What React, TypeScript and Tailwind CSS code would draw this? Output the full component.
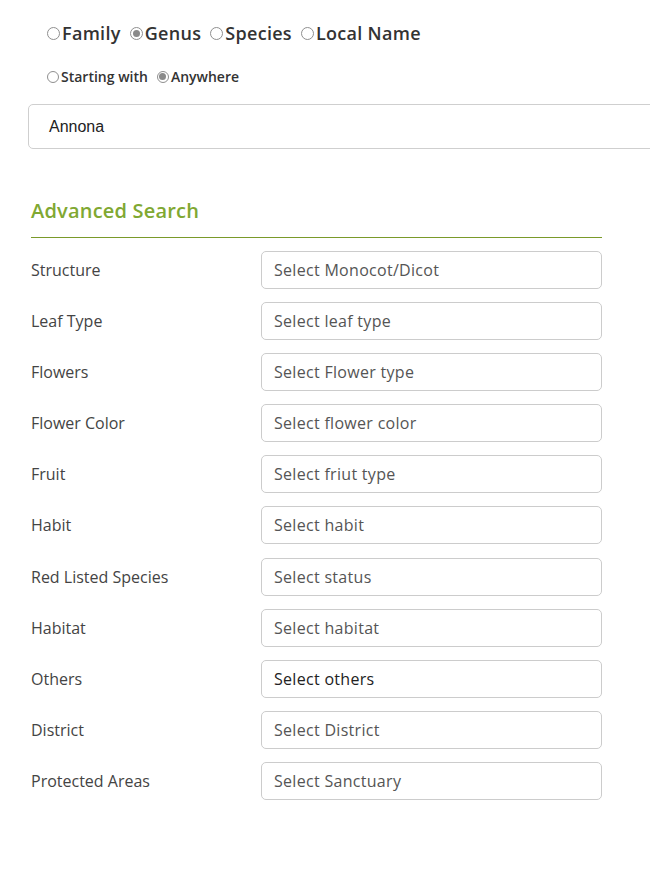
import React, { useState } from "react";

const fields: [string, string][] = [
    ["Structure", "Select Monocot/Dicot"],
    ["Leaf Type", "Select leaf type"],
    ["Flowers", "Select Flower type"],
    ["Flower Color", "Select flower color"],
    ["Fruit", "Select friut type"],
    ["Habit", "Select habit"],
    ["Red Listed Species", "Select status"],
    ["Habitat", "Select habitat"],
    ["Others", "Select others"],
    ["District", "Select District"],
    ["Protected Areas", "Select Sanctuary"],
];

function Radio({checked, small}: {checked: boolean; small?: boolean}){
    return (
        <span className={"inline-flex items-center justify-center rounded-full border border-[#8f8f8f] bg-white " + (small ? "h-[12px] w-[12px]" : "h-[13px] w-[13px]")}>
            {checked && <span className="h-[7px] w-[7px] rounded-full bg-[#8a8a8a]"/>}
        </span>
    )
}

function App(){
    const [kind, setKind] = useState<string>("Genus")
    const [where, setWhere] = useState<string>("Anywhere")

    return(
        <div className="w-[650px] h-[892px] overflow-hidden bg-white" style={{fontFamily: "'Open Sans', sans-serif"}}>
            <div className="pl-[47px] pt-[20px] flex flex-row items-center gap-[9px] text-[18px] leading-[27px] font-semibold tracking-[0.3px] text-[#333]">
                {["Family", "Genus", "Species", "Local Name"].map((k)=>(
                    <label key={k} onClick={()=>setKind(k)} className="flex items-center gap-[2px] cursor-pointer">
                        <Radio checked={kind === k}/>
                        <span>{k}</span>
                    </label>
                ))}
            </div>
            <div className="pl-[47px] pt-[19px] flex flex-row items-center gap-[9px] text-[14px] leading-[21px] font-semibold text-[#333]">
                {["Starting with", "Anywhere"].map((k)=>(
                    <label key={k} onClick={()=>setWhere(k)} className="flex items-center gap-[2px] cursor-pointer">
                        <Radio checked={where === k} small/>
                        <span>{k}</span>
                    </label>
                ))}
            </div>
            <div className="pl-[28px] pt-[17px]">
                <div className="w-[650px] h-[45px] border border-[#cfcfcf] rounded-[5px] flex items-center pl-[20px] text-[16px] text-[#222]"
                    style={{fontFamily: "'Liberation Sans', Arial, sans-serif"}}>
                    Annona
                </div>
            </div>
            <div className="pl-[31px] pr-[48px] pt-[48px]">
                <h2 className="text-[20px] font-semibold text-[#80a832] leading-[28px] tracking-[0.2px]">
                    Advanced Search
                </h2>
                <div className="mt-[12px] h-px bg-[#7a9a2a]"/>
                <div className="mt-[13px] flex flex-col gap-[13.1px]">
                    {fields.map(([label, placeholder])=>(
                        <div key={label} className="flex flex-row items-center">
                            <div className="w-[230px] text-[16px] text-[#444]">{label}</div>
                            <div className={"flex-1 h-[38px] border border-[#cccccc] rounded-[5px] flex items-center pl-[12px] text-[16px] tracking-[0.3px] " + (label === "Others" ? "text-[#222]" : "text-[#555]")}>
                                {placeholder}
                            </div>
                        </div>
                    ))}
                </div>
            </div>
        </div>
    )
}

export default App;
